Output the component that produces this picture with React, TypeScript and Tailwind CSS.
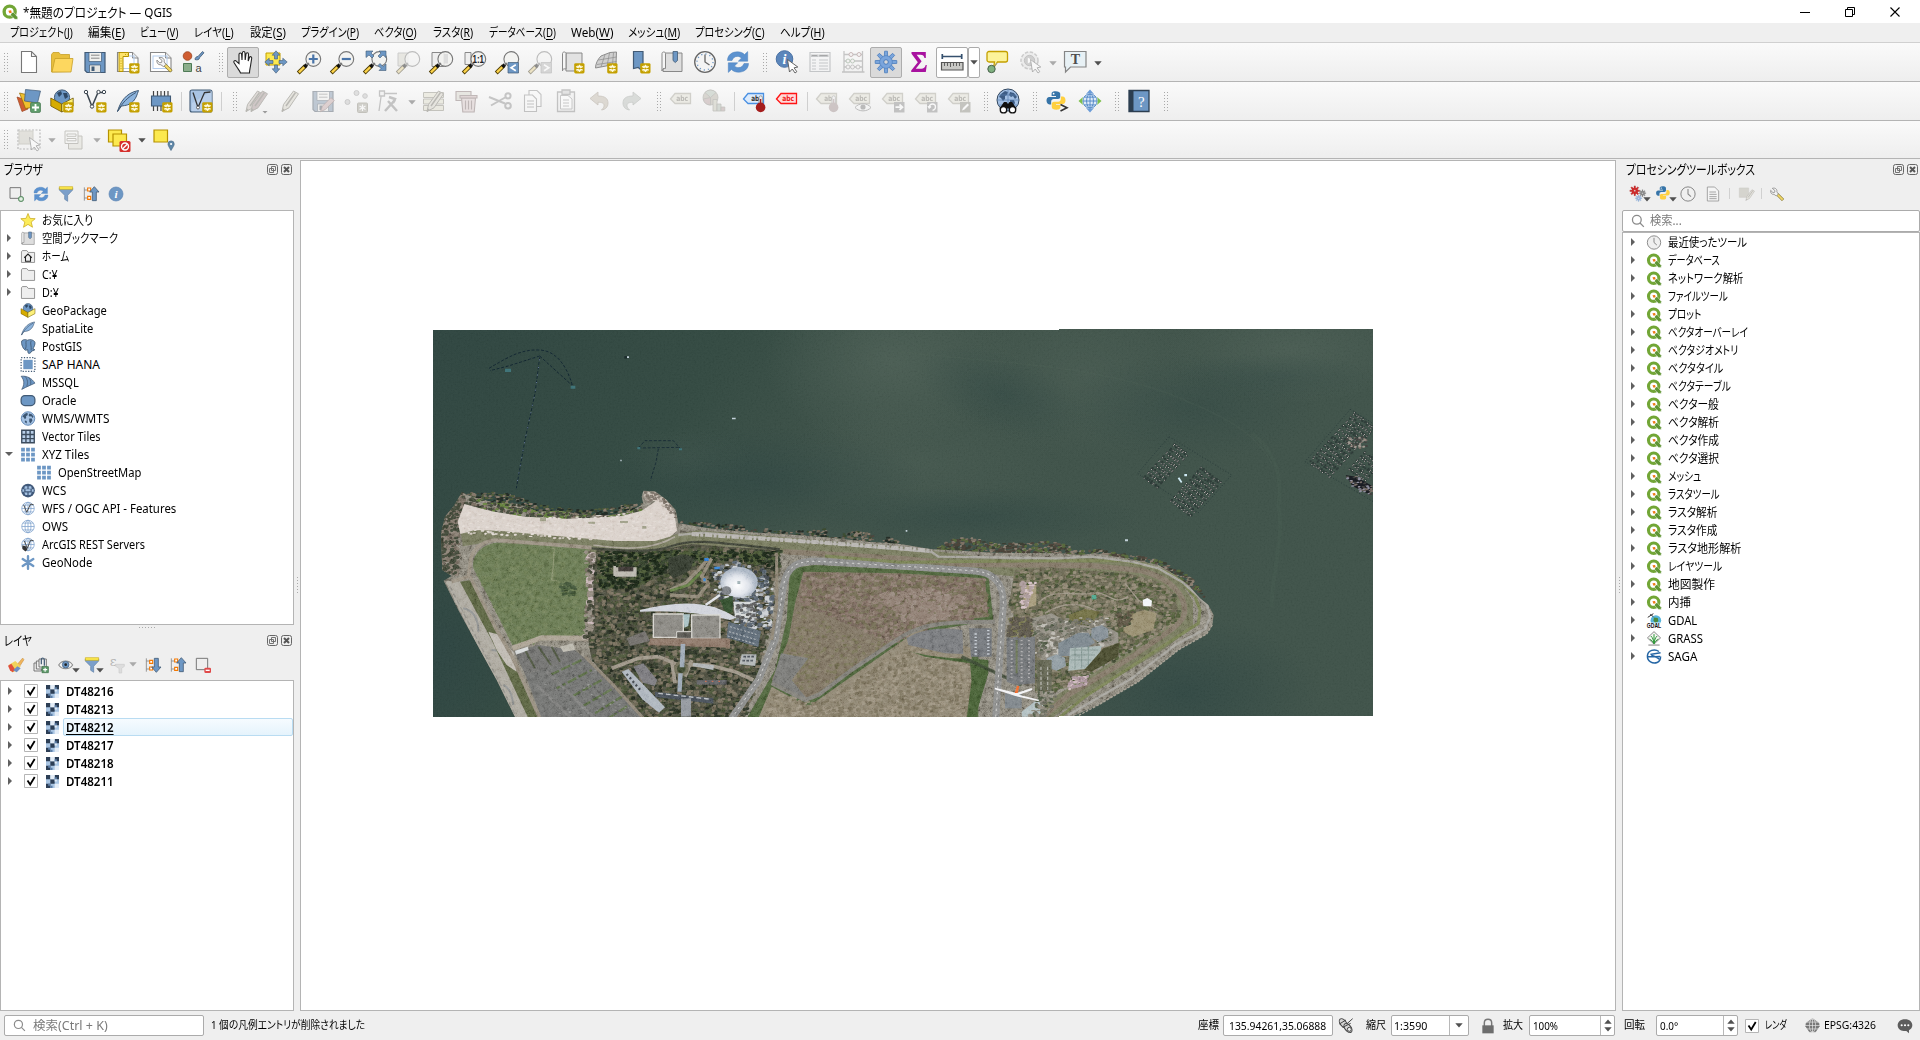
import React, { useLayoutEffect, useRef, useState } from "react";

/* ---------- text fitted to a known width ---------- */
function Fit({ w, children, className = "", inner = "" }: { w: number; children: React.ReactNode; className?: string; inner?: string }) {
  const ref = useRef<HTMLSpanElement>(null);
  const [s, setS] = useState(1);
  useLayoutEffect(() => {
    if (ref.current && ref.current.offsetWidth) setS(w / ref.current.offsetWidth);
  }, [w]);
  return (
    <span className={"inline-block shrink-0 whitespace-nowrap " + className} style={{ width: w }}>
      <span ref={ref} className={"inline-block origin-left whitespace-nowrap " + inner} style={{ transform: `scaleX(${s})` }}>
        {children}
      </span>
    </span>
  );
}

/* ---------- icon pieces ---------- */
const B = "#6d97c4";
const BD = "#415a75";

const Badge = () => (
  <g>
    <rect x="13.2" y="13.2" width="10.3" height="10.3" rx="1.4" fill="#c4a000" />
    <path d="M18.4 14.8v7.2M15 16.6l6.8 3.6M21.8 16.6L15 20.2M16.6 15.6l3.6 5.8M20.2 15.6l-3.6 5.8" stroke="#fffbe0" strokeWidth="1.1" />
    <circle cx="18.4" cy="18.4" r="1" fill="#c4a000" />
  </g>
);
const Handle = () => (
  <g strokeLinecap="butt">
    <path d="M1.2 23L8.6 15.8" stroke="#4d3b00" strokeWidth="4" />
    <path d="M1.9 22.3L7.4 17" stroke="#fcd34a" strokeWidth="2.4" />
    <path d="M7.4 17L10 14.5" stroke="#111" strokeWidth="3.2" />
    <path d="M9.5 15l2.5-2" stroke="#777" strokeWidth="1.4" />
  </g>
);
const Lens = () => <circle cx="16.3" cy="9" r="7.4" fill="#f2f2f0" fillOpacity=".85" stroke="#777" strokeWidth="1.1" />;
const Tag = ({ t = "abc", fill = "#e4dfc6", stroke = "#a8a38c", color = "#77725e" }: { t?: string; fill?: string; stroke?: string; color?: string }) => (
  <g>
    <path d="M1.5 10L6 4.500h15.500v10H6z" fill={fill} stroke={stroke} strokeWidth="1.3" />
    <text x="13.2" y="12.4" fontSize="7.5" fontWeight="700" textAnchor="middle" fill={color} fontFamily="'DejaVu Sans'" textLength={t.length * 4} lengthAdjust="spacingAndGlyphs">{t}</text>
  </g>
);
const Caret = ({ dim = false, className = "" }: { dim?: boolean; className?: string }) => (
  <svg viewBox="0 0 8 5" className={"h-[5px] w-[8px] shrink-0 " + className}>
    <path d="M.3.3h7.4L4 4.5z" fill={dim ? "#aaa" : "#505050"} />
  </svg>
);
const Refresh = () => (
  <g fill="#5c92cf" stroke="#4a7fbb" strokeWidth=".5">
    <path d="M1.5 10.5C1.5 5 6 1.8 11.5 1.8c3 0 5.3 1 7 2.8l3.2-3v9.6h-9.4l3.2-3.2C14.4 7 13 6.400 11.500 6.400c-3 0-4.200 1.500-5.500 4.100z" />
    <path d="M22.500 13.500c0 5.500-4.500 8.700-10 8.700-3 0-5.300-1-7-2.800l-3.200 3v-9.600h9.400l-3.200 3.200c1.100 1 2.500 1.600 4 1.600 3 0 4.200-1.500 5.500-4.100z" />
  </g>
);
const Python = () => (
  <g>
    <path d="M11.500 1.500c-4 0-4.500 1.700-4.500 3V7h5v1H4.500C2.300 8 1.200 9.800 1.200 12.200s1.300 4.300 3.300 4.300h2V13.500c0-1.800 1.300-3 3-3h4.800c1.500 0 2.500-1.100 2.500-2.600V4.500c0-2-2-3-5.300-3z" fill="#3674a8" />
    <circle cx="9.300" cy="4.300" r="1" fill="#fff" />
    <path d="M12.500 22.500c4 0 4.500-1.700 4.500-3V17h-5v-1h7.500c2.200 0 3.300-1.800 3.300-4.200S21.500 7.500 19.500 7.500h-2v3c0 1.800-1.300 3-3 3H9.700c-1.500 0-2.500 1.100-2.500 2.600v3.400c0 2 2 3 5.300 3z" fill="#ffd040" />
  </g>
);
const Globe = ({ fill = "#fff", stroke = B }: { fill?: string; stroke?: string }) => (
  <g fill="none" stroke={stroke} strokeWidth="1.300">
    <circle cx="12" cy="12" r="10" fill={fill} />
    <ellipse cx="12" cy="12" rx="4.800" ry="10" />
    <path d="M2 12h20M3.800 6.500h16.400M3.800 17.500h16.400M12 2v20" />
  </g>
);
const EarthBlobs = ({ fill = "#3b5572" }: { fill?: string }) => (
  <path d="M5 6l4-3 3 1-1 3-2 1v3l-2 2-2-3-2-1zM14 4l4 1 3 4-2 2-2-3-2 1-2-2zM14 12l4 0 1 3-3 5-2-3zM7 15l3 1 0 4-3-2z" fill={fill} />
);
const Wrench = () => (
  <g>
    <path d="M12 12l9 9" stroke="#7a6a20" strokeWidth="4.400" />
    <path d="M12 12l8.600 8.600" stroke="#f2d96b" strokeWidth="2.800" />
    <path d="M5 3.500l4 3.500-.5 2.500L6 10 2.500 6.500C1.800 10 4 13 7.500 12.500L11 15l3-3-2.200-3.200C12.800 5 9 2 5 3.500z" fill="#f4f4f4" stroke="#777" strokeWidth="1" />
  </g>
);
const Pencil = ({ x = 0, fill = "#d9d2b8" }: { x?: number; fill?: string }) => (
  <g transform={`translate(${x} 0)`}>
    <path d="M3 22.500l1.500-7L14.500 2l5 2.800-9.500 14z" fill={fill} stroke="#77725e" strokeWidth="1" />
    <path d="M7 17L16.500 3.500M3 22.500l2-2.500" stroke="#77725e" strokeWidth="1.500" />
  </g>
);
const Gear = ({ fill = "#7aa5dc", stroke = "#4b7dbd", hole = "#d8d8d8" }: { fill?: string; stroke?: string; hole?: string }) => (
  <g>
    {[0, 45, 90, 135, 180, 225, 270, 315].map((a) => (
      <path key={a} transform={`rotate(${a} 12 12)`} d="M10.300 7L10.600 1.200h2.800L13.700 7z" fill={fill} stroke={stroke} strokeWidth=".8" />
    ))}
    <circle cx="12" cy="12" r="6.200" fill={fill} stroke={stroke} strokeWidth=".8" />
    <circle cx="12" cy="12" r="5.700" fill={fill} />
    <circle cx="12" cy="12" r="2.300" fill={hole} stroke={stroke} strokeWidth="1" />
  </g>
);
const Thermo = ({ c = "#a51d1d" }: { c?: string }) => (
  <g>
    <path d="M17 8.500a1.700 1.700 0 013.400 0V15H17z" fill="#eee" stroke="#888" strokeWidth=".8" />
    <circle cx="18.600" cy="18.400" r="4.800" fill={c} />
    <path d="M18.600 10v6" stroke={c} strokeWidth="1.400" />
  </g>
);
const PageIcon = () => (
  <path d="M4.500 1.500h10l5 5v16h-15z M14.500 1.500v5h5" fill="#fff" stroke="#777" strokeWidth="1.100" />
);
const Arrow4 = () => (
  <g fill={B} stroke={BD} strokeWidth=".6">
    {[0, 90, 180, 270].map((a) => (
      <path key={a} transform={`rotate(${a} 12 12)`} d="M12 .8l3.800 4.400h-2.300V9h-3V5.200H8.200z" />
    ))}
  </g>
);
const Floppy = () => (
  <g>
    <path d="M2 2.500h20v20H4l-2-2z" fill={B} stroke={BD} strokeWidth="1.200" />
    <path d="M6 2.500h12.500v9H6z" fill="#f1f1ee" stroke={BD} strokeWidth=".7" />
    <path d="M8 5.200h8.500M8 8.200h8.500" stroke="#888" strokeWidth="1" />
    <path d="M6.500 15h11v7.500h-11z" fill="#e6e6e3" stroke={BD} strokeWidth=".7" />
    <path d="M8.500 16.500h3v4.500h-3z" fill={BD} />
  </g>
);
const Layout = () => (
  <g>
    <path d="M1.500 2.500h15l5.500 5.500v13.500H1.500z" fill="#fff" stroke="#888" strokeWidth="1.100" />
    <path d="M16.500 2.500V8H22" fill="#eee" stroke="#888" />
    <rect x="4" y="6" width="14" height="12.500" fill="none" stroke="#b4cdee" />
  </g>
);
const Feather = () => (
  <g>
    <path d="M1.500 22.500C4 14 9 4 22.500 1.500c-1.500 4-2 7-5 10.500-3.500 4-8 4.500-12 5z" fill="#8db4dd" stroke={BD} strokeWidth="1" />
    <path d="M1.500 22.500C6 14 12 8 20 3.500" fill="none" stroke={BD} strokeWidth="1" />
  </g>
);
const VShape = () => (
  <g fill="none" stroke="#3c4650" strokeWidth="1.500">
    <path d="M3.500 3.500l5.500 14L15 3.500l6 0" />
    <circle cx="3" cy="3" r="1.700" fill="#fff" strokeWidth="1" /><circle cx="21" cy="3" r="1.700" fill="#fff" strokeWidth="1" /><circle cx="15.500" cy="3" r="1.700" fill="#fff" strokeWidth="1" /><circle cx="9" cy="17.500" r="1.700" fill="#fff" strokeWidth="1" />
  </g>
);
const Box3 = () => (
  <g>
    <circle cx="12" cy="8.500" r="7.600" fill={B} stroke={BD} />
    <path d="M7 4l4-2 1 3-3 3zM13 4l4 0 1 4-3 2z" fill="#2f4864" />
    <path d="M.8 9l11 6v8L.8 17z" fill="#d6ac00" stroke="#6d5600" strokeWidth=".8" />
    <path d="M23.200 9l-11.400 6v8l11.400-6z" fill="#fcf07a" stroke="#6d5600" strokeWidth=".8" />
  </g>
);
const Undo = () => <path d="M3 9.500l8-6.500v4c7 0 10 2.500 10 7 0 4-2.500 6.500-6.500 7 2-2 2.500-3.200 2.500-4.500 0-2.500-2-3.200-6-3.200V16z" fill="#c9b79a" stroke="#a08c70" strokeWidth=".8" />;
const Trash = () => (
  <g stroke="#8f6a6a" strokeWidth="1.100">
    <path d="M1 2.500h15v9H1z" fill="#d8d3c0" />
    <path d="M6.500 9h14l-1.300 14H7.800z" fill="#e5c3c3" />
    <path d="M5 6.500h17v2.500H5z" fill="#d9adad" />
    <path d="M10.500 11.500v9M13.500 11.500v9M16.500 11.500v9" />
  </g>
);
const Cursor = () => <path d="M12.500 9.500l2 12.500 2.800-3 2.700 4 1.800-1.300-2.700-3.900 3.700-.8z" fill="#fff" stroke="#555" strokeWidth=".9" />;

const G: Record<string, React.ReactNode> = {
  new: <PageIcon />,
  open: <g><path d="M1.500 4.500L3 2.500h6l1.500 2h9v17l-18 .5z" fill="#e8bf3d" stroke="#c69f27" strokeWidth=".8" /><path d="M5 8.500h18L21 22H2z" fill="#fdd75f" stroke="#c69f27" strokeWidth=".8" /></g>,
  save: <Floppy />,
  layoutNew: <g><Layout /><path d="M3 2.500h9.500v4H7v15H3z" fill="#fde36b" stroke="#b59200" strokeWidth="1" /><path d="M5 8v12M9 4.500h3" stroke="#b59200" strokeWidth=".8" strokeDasharray="1 1.500" /><Badge /></g>,
  layoutMgr: <g><Layout /><g transform="translate(6 5) scale(.78)"><Wrench /></g></g>,
  style: <g><circle cx="5.500" cy="6" r="4.300" fill="#cf5d31" stroke="#9b4420" strokeWidth=".8" /><path d="M13 9.500c0-2 1.500-3 3-3L20.500 1.500l1.500 1.300-4.500 5c0 2-2.500 2.500-4.500 1.700z" fill={B} stroke={BD} strokeWidth=".8" /><path d="M1.500 13.500h8v8h-8z" fill="#8cae8c" stroke="#4e7a55" strokeWidth="1" /><text x="13.500" y="21.500" fontSize="11" fill="#444" fontFamily="'Liberation Sans'">a</text></g>,
  pan: <path d="M8 13.500V4.500c0-2 2.600-2 2.600 0l.4 5.500.3-7c.2-2 2.600-2 2.700 0l.2 7 .8-6c.3-1.800 2.500-1.600 2.500.2l-.3 6.800 1.200-3.500c.7-1.500 2.500-.9 2.300.8L19.500 16c-.5 3-1 4-1 7H9.500c-.5-2-2.500-4-4-6.500L3 12.500c-.8-1.800 1.300-2.600 2.400-1.200z" fill="#fff" stroke="#222" strokeWidth="1.100" />,
  panSel: <g><path d="M2 3h14v12H2z" fill="#fce94f" stroke="#c4a000" /><Arrow4 /></g>,
  zoomIn: <g><Lens /><Handle /><path d="M16.300 4.500v9M11.800 9h9" stroke="#4a74a8" strokeWidth="2.200" /></g>,
  zoomOut: <g><Lens /><Handle /><path d="M11.800 9h9" stroke="#4a74a8" strokeWidth="2.200" /></g>,
  zoomFull: <g><Lens /><Handle /><g fill={B} stroke={BD} strokeWidth=".6"><path d="M3 1h7L8 3l3 3-2 2-3-3-3 2.500zM23 1h-7l2 2-3 3 2 2 3-3 3 2.500zM23 20.500h-7l2-2-3-3 2-2 3 3 3-2.500z" /></g></g>,
  zoomSel: <g><path d="M2 3h10v13H2z" fill="#d9d4be" stroke="#999" /><Lens /><Handle /></g>,
  zoomLayer: <g><path d="M3 2.500h12v14H3z" fill="#eee" stroke="#888" /><Lens /><path d="M15 4h4v9.500h-4z" fill="#ddd" /><Handle /></g>,
  zoom11: <g><path d="M3 2.500h6v12H3z" fill="#eee" stroke="#888" /><Lens /><Handle /><text x="16.300" y="12.600" fontSize="10" fontWeight="700" textAnchor="middle" fill="#222" fontFamily="'Liberation Sans'" textLength="11.500" lengthAdjust="spacingAndGlyphs">1:1</text></g>,
  zoomLast: <g><Lens /><Handle /><path d="M13 12.500h10.500V23H13z" fill={B} stroke={BD} strokeWidth=".7" /><path d="M20.800 14.800L16 17.700l4.800 3" fill="none" stroke="#fff" strokeWidth="1.600" /></g>,
  zoomNext: <g><Lens /><Handle /><path d="M13 12.500h10.500V23H13z" fill="#b5b5b5" stroke="#888" strokeWidth=".7" /><path d="M16 14.800l4.800 2.900L16 20.700" fill="none" stroke="#fff" strokeWidth="1.600" /></g>,
  mapNew: <g><path d="M5 3h16v18H5z" fill="#e2e2e2" stroke="#888" /><path d="M1.500 3.500c0-2 3.500-2 3.500 0V19c-2-.5-3.500 0-3.500 2z" fill="#f6f6f6" stroke="#888" /><Badge /></g>,
  map3d: <g><path d="M7 6l9-3.500 6.500-.5-.5 12-10 2-10.500 2c0-4 2-8.500 5.500-12z" fill="#cfcfcf" stroke="#8d8d8d" /><path d="M4.500 10l18-3M3 14.500l19.500-3M11 4.500L7 17M15.500 3l-2.500 13M19.500 2.500l-1 12" stroke="#8d8d8d" strokeWidth=".7" /><Badge /></g>,
  bookmarkNew: <g><path d="M6.500 1.500h9.500v20l-4.800-4-4.700 1z" fill={B} stroke={BD} strokeWidth="1.200" /><Badge /></g>,
  bookmark: <g><path d="M5 3h17v18.500H3z" fill="#dedede" stroke="#888" /><path d="M2 3.500c0-2 3.500-2 3.500 0V18.500c-2-.5-3.500 .5-3.500 2.500z" fill="#f6f6f6" stroke="#888" /><path d="M13 1.500h4.500v9l-2.250 2-2.250-2z" fill={B} stroke={BD} strokeWidth=".8" /></g>,
  clock: <g><circle cx="12" cy="12" r="10.300" fill="#f4f4f4" stroke="#666" strokeWidth="1.300" /><circle cx="12" cy="12" r="8" fill="none" stroke={B} strokeWidth="1.300" strokeDasharray="1.200 3" /><path d="M12 4.500V12l4.500 3" fill="none" stroke="#666" strokeWidth="1.300" /></g>,
  refresh: <Refresh />,
  identify: <g><circle cx="9.500" cy="9" r="8.300" fill="#5b86bb" stroke="#4a72a4" /><text x="9.500" y="14" fontSize="14" fontStyle="italic" fontWeight="700" textAnchor="middle" fill="#fff" fontFamily="'Liberation Serif'">i</text><Cursor /></g>,
  table: <g><path d="M2 2.500h20v19H2z" fill="#f2f4f6" stroke="#8a929a" strokeWidth="1.200" /><path d="M3.500 5h6v1.500h-6zM11 5h9v1.500h-9zM4 10h4M11 10h9M4 13h4M11 13h9M4 16h4M11 16h9M4 19h4M11 19h9" stroke="#8a929a" strokeWidth="1.100" /></g>,
  abacus: <g fill="none" stroke="#8b8b8b" strokeWidth="1.300"><path d="M3 1v21M21.500 1v21M1 22h22.500M3 4.500h18.500M3 11h18.500M3 17h18.500" /><g fill="#f5eeee" strokeWidth="1"><circle cx="10" cy="4.500" r="2" stroke="#a66" /><circle cx="18" cy="4.500" r="2" stroke="#a66" /><circle cx="7" cy="11" r="2" stroke="#696" /><circle cx="11.500" cy="11" r="2" stroke="#696" /><circle cx="7" cy="17" r="2" /><circle cx="11.500" cy="17" r="2" /><circle cx="17" cy="17" r="2" /></g></g>,
  gear: <Gear />,
  sigma: <path d="M4.500 2h14.300v6h-1.300c-.6-2.300-1.600-3.200-4-3.200H9.600l5 6.500-5.800 7.500h5.500c2.600 0 3.600-1.200 4.400-3.700h1.100L18.800 22H4.200v-1.500l6.600-8.300-6.300-8.500z" fill="#a8129f" />,
  measure: <g><path d="M2 6.500h20M2.300 4v5M21.700 4v5" stroke="#35506e" strokeWidth="1.700" /><path d="M1.500 12.500h21.500v7.500H1.500z" fill="#c9c9c6" stroke="#555" strokeWidth="1.200" /><path d="M4.500 13v3M7.500 13v3M10.500 13v4M13.500 13v3M16.500 13v3M19.500 13v3" stroke="#555" strokeWidth=".9" /></g>,
  tip: <g><path d="M4 1.500h16.500a2 2 0 012 2V10a2 2 0 01-2 2H12.500L8.500 18l1-6H4a2 2 0 01-2-2V3.500a2 2 0 012-2z" fill="#fcf39a" stroke="#c4a000" strokeWidth="1.300" /><path d="M12 13l-4 5" stroke="#999" /><circle cx="6.500" cy="19" r="3.700" fill="#7fb17f" stroke="#47604a" strokeWidth="1" /></g>,
  action: <g><circle cx="11.500" cy="10.500" r="8.500" fill="#e3e3e3" stroke="#999" strokeWidth="1.500" strokeDasharray="3.500 1.500" /><circle cx="11.500" cy="10.500" r="5.200" fill="#a2a2a2" stroke="#888" /><path d="M9.800 7.500l5 3-5 3z" fill="#fff" /><Cursor /></g>,
  text: <g><path d="M1.500 1.500H23v15.500H7.500L2.500 22V17h-1z" fill="#e8f1f5" stroke="#858585" strokeWidth="1.200" /><text x="12.300" y="14" fontSize="14" fontWeight="700" textAnchor="middle" fill="#4d4d4d" fontFamily="'Liberation Serif'">T</text></g>,
  dsm: <g strokeWidth=".7"><path d="M0 8l9 3 2 9-6 2.500z" fill="#cf5d31" stroke="#9b4420" /><path d="M2.500 4l9 2 6 12-9 1.500z" fill="#f0c02e" stroke="#8f6a00" /><path d="M8.500 .5l15 1.500-3 12-13-2z" fill={B} stroke={BD} /><rect x="13.500" y="13.500" width="10" height="10" rx="1.500" fill="#5f9c6b" stroke="#477a52" /><path d="M18.500 15v7M15 18.500h7" stroke="#fff" strokeWidth="1.800" /></g>,
  gpkg: <g><Box3 /><Badge /></g>,
  shp: <g><VShape /><Badge /></g>,
  spatialite: <g><Feather /><Badge /></g>,
  mem: <g><path d="M4.500 2v20M8.500 2v20M12 2v20M15.500 2v20M19 2v12" stroke="#444" strokeWidth="1.200" /><path d="M2.500 7h19v10h-19z" fill={B} stroke={BD} strokeWidth="1.100" /><Badge /></g>,
  virtual: <g><rect x="1" y="1" width="22" height="22" rx="2" fill="#a9c4e3" stroke={BD} strokeWidth="1.100" /><path d="M3 14L23 2v20H3z" fill="#c4d7ee" opacity=".6" /><path d="M4 3.500l5 15L15.500 3.500l6-.5" fill="none" stroke="#333" strokeWidth="1.300" /><circle cx="9" cy="18.500" r="1.500" fill="#fff" stroke="#333" strokeWidth=".7" /><Badge /></g>,
  edits: <g><Pencil x={-2} fill="#cdbcae" /><Pencil x={3} fill="#b58f8f" /><path d="M17.500 22h5l-2.500 2.500z" fill="#333" /></g>,
  pencil: <Pencil x={1} />,
  saveEdit: <g><Floppy /><g transform="translate(8 8) scale(.7)"><path d="M2 21l3-8L17 1l5 4L9 18z" fill="#d9a0a0" stroke="#855" /></g></g>,
  points: <g fill="#c4c4c4" stroke="#999"><circle cx="3.500" cy="13" r="2.500" /><circle cx="12.500" cy="4" r="2.500" /><circle cx="21" cy="7" r="2.300" /><rect x="13.500" y="14" width="10" height="9.500" rx="1" fill="#a8a48e" stroke="#8e8a70" /><path d="M18.500 15.500v6.500M15.500 17l6 3.500M21.500 17l-6 3.500" stroke="#fff" strokeWidth="1.200" /></g>,
  vertex: <g fill="none" stroke="#8a8a8a" strokeWidth="1.300"><path d="M2 22L4.500 4.500H20" /><path d="M2.500 2h5v5h-5z" fill="#eee" /><path d="M8 22L18 11M11 12l9 10" strokeWidth="2.500" /><path d="M12 8l6 2-2 4" strokeWidth="2.500" /></g>,
  multiEdit: <g><path d="M1.500 3.500h20v5h-20zM1.500 10h20v5h-20zM1.500 16.500h20v5h-20z" fill="#e3dfb8" stroke="#8f8b70" /><Pencil x={2} /></g>,
  trash: <Trash />,
  cut: <g fill="none" stroke="#8c8c8c" strokeWidth="2"><path d="M1 8l16 6.500M3 16.500L18 8" /><circle cx="20" cy="6.800" r="2.600" /><circle cx="20" cy="16.800" r="2.800" /></g>,
  copy: <g fill="#fafafa" stroke="#888" strokeWidth="1.100"><path d="M8 1.500h8l4 4v12H8z" /><path d="M3.500 6h8l4 4v12.500h-12z" /><path d="M6 12h7M6 15h7M6 18h7" /></g>,
  paste: <g fill="#eee" stroke="#888" strokeWidth="1.300"><path d="M3.500 3h17v19.500h-17z" /><path d="M8 1h8v4.500H8z" fill="#ccc" /><path d="M6.500 6.500h7.500l4 3.500v10H6.500z" fill="#fff" strokeWidth=".9" /><path d="M9 11h6M9 14h6M9 17h6" strokeWidth=".9" /></g>,
  undo: <Undo />,
  redo: <g transform="translate(24 0) scale(-1 1)"><path d="M3 9.500l8-6.500v4c7 0 10 2.500 10 7 0 4-2.500 6.500-6.500 7 2-2 2.500-3.200 2.500-4.500 0-2.500-2-3.200-6-3.200V16z" fill="#b5bfb5" stroke="#909a90" strokeWidth=".8" /></g>,
  tag: <Tag />,
  diagram: <g stroke="#8a8a7a" strokeWidth=".8"><circle cx="8.500" cy="8.500" r="7.500" fill="#b8af97" /><path d="M8.500 8.500L3 3.500a7.500 7.500 0 0111 0z" fill="#a9c0a9" /><path d="M8.500 8.500v7.500a7.500 7.500 0 01-7.300-6z" fill="#c99a9a" /><path d="M11 10.500h4v11.500h-4z" fill="#c7c7a8" /><path d="M15 15h4v7h-4z" fill="#a9c0a9" /><path d="M19 18h3.800v4H19z" fill="#c99a9a" /></g>,
  tagBlue: <g><Tag t="ab" fill="#dcebfc" stroke="#4a90e2" color="#333" /><Thermo /></g>,
  tagRed: <Tag fill="#ffd9d9" stroke="#ff1414" color="#f01818" />,
  tagPin: <g><Tag t="ab" /><Thermo c="#b08a8a" /></g>,
  tagEye: <g><Tag /><path d="M7 18.500c4-5 12-5 16 0-4 4.500-12 4.500-16 0z" fill="#f6f6f6" stroke="#777" /><circle cx="15" cy="18" r="2.600" fill="#777" /></g>,
  tagMove: <g><Tag /><path d="M13 13h10.500v10.500H13z" fill="#888" /><path d="M14.500 18.200h6.500M18.500 15.500l3 2.700-3 2.700" stroke="#fff" strokeWidth="1.700" fill="none" /></g>,
  tagRot: <g><Tag /><path d="M13 13h10.500v10.500H13z" fill="#888" /><path d="M15.500 18a3 3 0 116 0c0 2-1.500 3-3 3.300M17 17.500l-1.800 1.500-1.200-2" stroke="#fff" strokeWidth="1.300" fill="none" /></g>,
  tagEdit: <g><Tag /><path d="M13 13h10.500v10.500H13z" fill="#8f8d78" /><path d="M15 21.500l1-2.500 4.500-4.500 1.500 1.500L17.500 20.500z" fill="#fff" /></g>,
  search: <g><circle cx="12" cy="11" r="11" fill="#a3c0e4" stroke="#33475e" /><g transform="translate(0 -1)"><EarthBlobs fill="#3d5c84" /></g><path d="M1 11h22M12 0v20M3 6h18M3 16h18" stroke="#5980b0" strokeWidth=".7" /><path d="M8 13h2.500l1.500 2 1.500-2H16l4.500 6.500-5 2.500-3.500-3-3.500 3-5-2.500z" fill="#111" /><circle cx="7.500" cy="20.700" r="3.200" fill="#fff" stroke="#111" strokeWidth="1.400" /><circle cx="16.500" cy="20.700" r="3.200" fill="#fff" stroke="#111" strokeWidth="1.400" /></g>,
  python: <g><g transform="scale(.88) translate(.5 1)"><Python /></g><path d="M15.500 15.500l6.500 3.200-6.500 3.300" fill="none" stroke="#333" strokeWidth="1.600" /></g>,
  plugin: <g><g transform="translate(3.500 3.500) scale(.71)"><Globe fill="#ddeaf8" stroke="#4e86c6" /></g><path d="M12 .5l4 4.500c-3-1-5-1-8 0zM12 23.500l4-4.500c-3 1-5 1-8 0z" fill="#6b9cd8" /><path d="M.5 12L5 8c-1 3-1 5 0 8zM23.500 12L19 8c1 3 1 5 0 8z" fill="#7cc04c" /></g>,
  help: <g><path d="M2 1.500h20v21H2z" fill={B} stroke="#2c3e50" strokeWidth="1.300" /><path d="M2 1.500h4.500v21H2z" fill="#2c3e50" /><text x="14.300" y="17.500" fontSize="15" textAnchor="middle" fill="#fff" fontFamily="'Liberation Serif'">?</text></g>,
  select: <g><path d="M1 2h22v19H1z" fill="none" stroke="#777" strokeWidth="1.200" strokeDasharray="2 1.500" /><path d="M2 3h14v13H2z" fill="#ccc8b2" stroke="#a8a48e" /><Cursor /></g>,
  selForm: <g stroke="#8f8b78"><path d="M6.500 8H20v13H6.500z" fill="#e1deca" /><path d="M3 3h13v12.500H3z" fill="#f3f3f0" /><path d="M5 6h9v2.300H5zM5 10.500h9v2.300H5z" fill="#fff" /></g>,
  deselect: <g><path d="M1.500 2h13v12h-13z" fill="#fce94f" stroke="#b59200" strokeWidth="1.200" /><path d="M6 6h13.500v12H6z" fill="#fce94f" stroke="#b59200" strokeWidth="1.200" /><rect x="12.500" y="13" width="11" height="11" rx="1.500" fill="#d5302c" /><circle cx="18" cy="18.500" r="3.500" fill="none" stroke="#fff" strokeWidth="1.400" /><path d="M15.500 21l5-5" stroke="#fff" strokeWidth="1.400" /></g>,
  selLoc: <g><path d="M2 2h13.500v12H2z" fill="#fce94f" stroke="#b59200" strokeWidth="1.200" /><path d="M19 22.500c-2-3.500-3-5-3-6.500a3 3 0 016.200 0c0 1.500-1.200 3-3.200 6.500z" fill="#5f87a8" stroke="#4a6b88" strokeWidth=".7" /><circle cx="19.100" cy="16" r="1.100" fill="#fff" /></g>,
  addLayer: <g><path d="M3 2.500h16v16H3z" fill="none" stroke="#777" strokeWidth="1.500" /><circle cx="19.500" cy="19.500" r="4" fill="#9cc4a0" stroke="#477a52" /><path d="M19.500 17v5M17 19.500h5" stroke="#fff" strokeWidth="1.400" /></g>,
  filter: <g><path d="M2 3h20v3l-7.500 8v9L10 20v-6L2 6z" fill="#7b9fca" stroke="#56789f" strokeWidth=".9" /><path d="M2 1h20v4H2z" fill="#fce94f" stroke="#c4a000" strokeWidth=".8" /></g>,
  collapse: <g><path d="M2 2v20M2 6h6M2 18h6" stroke="#888" strokeWidth="1.300" /><path d="M7 3h4.500v4.500H7zM7 15.500h4.500V20H7z" fill="#fff" stroke="#f57900" strokeWidth="1.700" /><path d="M17 1l7 8h-4v13h-6V9h-4z" fill={B} stroke={BD} strokeWidth="1.200" /></g>,
  expand: <g><path d="M2 2v20M2 6h6M2 18h6" stroke="#888" strokeWidth="1.300" /><path d="M7 5h4.500v4.500H7zM7 15h4.500v4.500H7z" fill="#fff" stroke="#f57900" strokeWidth="1.700" /><path d="M17 23l-7-8h4V2h6v13h4z" fill={B} stroke={BD} strokeWidth="1.200" /></g>,
  info: <g><circle cx="12" cy="12" r="10.500" fill={B} stroke="#5b84b3" /><text x="12" y="18" fontSize="17" fontStyle="italic" fontWeight="700" textAnchor="middle" fill="#fff" fontFamily="'Liberation Serif'">i</text></g>,
  brush: <g><path d="M14 11L22 1.500 24 4 17.500 14z" fill="#f0b45c" stroke="#b87e2c" strokeWidth=".6" /><path d="M1 12l10-6 8 8-6 7-7 2z" fill="#f0d35c" /><path d="M0 13l5-3 6 9-4 4-4-3z" fill="#e0503c" /><path d="M8 20l6-6 5 3-6 6z" fill="#6d8fc4" /></g>,
  addGroup: <g fill="#efefef" stroke="#666" strokeWidth="1.300"><path d="M1.500 9h11v12h-11z" /><path d="M5 6h11v12H5z" /><path d="M9 3h11v12H9z" /><path d="M12.500 11V4.500c0-4 4.500-4 4.500 0V13" fill="none" stroke={BD} strokeWidth="1.800" /><path d="M13.500 14.500h9.500v9h-9.500z" fill="#5f9c6b" stroke="#477a52" /><path d="M18.200 16v6M15.300 19h6" stroke="#fff" strokeWidth="1.700" /></g>,
  eye: <g><path d="M1 12C6 4 17 4 22 12c-5 7.500-16 7.500-21 0z" fill="#f4f4f4" stroke="#8b8b8b" strokeWidth="1.600" /><circle cx="11.500" cy="11.500" r="5" fill={B} stroke={BD} /><circle cx="11.500" cy="11.500" r="2" fill="#222" /></g>,
  epsilon: <g><text x="1" y="14" fontSize="20" fill="#b5b5b5" fontFamily="'DejaVu Serif'">ε</text><path d="M10 11h13v3l-4 3v7h-4v-7l-5-3z" fill="#ddd" stroke="#ccc" /></g>,
  removeLayer: <g><path d="M2 2h17v17H2z" fill="none" stroke="#777" strokeWidth="1.500" /><rect x="14" y="16" width="10" height="8" rx="2" fill="#e04a4a" /><path d="M16 20h6" stroke="#fff" strokeWidth="2" /></g>,
  models: <g><g transform="translate(-1 -1) scale(.68)"><Gear fill="#d42b2b" stroke="#a41e1e" hole="#efefef" /></g><g transform="translate(13 5) scale(.48)"><Gear fill="#8a8a8a" stroke="#777" hole="#efefef" /></g><g transform="translate(7.500 13) scale(.45)"><Gear fill="#9db9dd" stroke="#85a5cf" hole="#efefef" /></g></g>,
  py: <g transform="translate(-1 -1) scale(.95)"><Python /></g>,
  history: <g><circle cx="12" cy="12" r="10.700" fill="#f0f0f0" stroke="#888" strokeWidth="1.500" /><path d="M12 4.500V12l4.500 4" fill="none" stroke="#888" strokeWidth="1.600" /></g>,
  doc: <g><path d="M3.500 1.500h11l6 6v15h-17z" fill="#f5f5f5" stroke="#999" strokeWidth="1.300" /><path d="M6.500 9h10M6.500 12.500h11M6.500 16h11M6.500 19h11" stroke="#999" strokeWidth="1.300" /></g>,
  editFeat: <g><path d="M2 3h14v14H2z" fill="#b9b49c" stroke="#aaa693" /><g transform="translate(8 4) scale(.78)"><Pencil x={2} /></g></g>,
  wrench: <Wrench />,
  star: <path d="M12 .8l3.200 7.800 8.300.5-6.400 5.400 2.100 8.300-7.200-4.600-7.200 4.600 2.100-8.300L.5 9.100l8.300-.5z" fill="#fcec5a" stroke="#c9aa1a" strokeWidth="1.200" />,
  folder: <path d="M1.500 4.500L3 2.500h7l2.500 3h10v16h-21z" fill="#eee" stroke="#888" strokeWidth="1.400" />,
  home: <g><path d="M1.500 4.500L3 2.500h7l2.500 3h10v16h-21z" fill="#eee" stroke="#888" strokeWidth="1.400" /><path d="M6 14l6-6 6 6M8 12.500v7h8v-7" fill="none" stroke="#222" strokeWidth="1.700" /></g>,
  box: <Box3 />,
  feather: <Feather />,
  postgis: <g fill={B} stroke={BD} strokeWidth="1.400"><path d="M2 3c3-3 7-2 9-1 4-2 10-1 12 3 1 4-2 8-3 11 1 1 2 1 3 1-2 2-4 2-5 2-1 4-5 5-6 3l-.5-5-3 1c-4-1-8-10-6.500-15z" /><path d="M9 3c-1 4 1 8-1 13M17 3c-2 4 1 9 0 15" fill="none" /></g>,
  hana: <g><path d="M4.500 4.500h15v15h-15z" fill={B} /><path d="M1 1h22v22H1z" fill="none" stroke={BD} strokeWidth="2" strokeDasharray="2 2.400" /></g>,
  mssql: <g fill={B} stroke={BD} strokeWidth="1.200"><path d="M1 2c9-1 17 3 22 11-6 3-12 5-21 10C6 16 7 9 1 2z" /><path d="M7 2c5 5 5 11 3 16M13 4c4 4 4 8 3 11.500" fill="none" /></g>,
  oracle: <rect x="1" y="4" width="22" height="16" rx="6" fill={B} stroke={BD} strokeWidth="2" />,
  wms: <g><circle cx="12" cy="12" r="10.800" fill="#a6c3e4" stroke="#5f86b4" strokeWidth="1.500" /><EarthBlobs /></g>,
  vtiles: <g><path d="M2 2h20v20H2z" fill="#b9cfe8" /><path d="M2 2h20v20H2zM8.700 2v20M15.400 2v20M2 8.700h20M2 15.400h20" fill="none" stroke="#3c4c5e" strokeWidth="2.200" /></g>,
  xyz: <path d="M1 1h6v6H1zM9 1h6v6H9zM17 1h6v6h-6zM1 9h6v6H1zM9 9h6v6H9zM17 9h6v6h-6zM1 17h6v6H1zM9 17h6v6H9zM17 17h6v6h-6z" fill={B} />,
  wcs: <g><circle cx="12" cy="12" r="11" fill="#41597a" /><path d="M7 5h4v4H6zM13 5h4l1 4h-5zM3 10h3v4H3zM8 10h8v3H8zM18 10h3v4h-3zM6 15h5v4H8zM13 15h5l-2 4h-3z" fill="#a6c3e4" /></g>,
  wfs: <g><Globe stroke="#86a8d0" /><path d="M5 6l5 12L16 5l5 1" fill="none" stroke="#444" strokeWidth="1.500" /></g>,
  ows: <Globe stroke="#86a8d0" />,
  arcgis: <g><Globe stroke="#86a8d0" /><path d="M6 6l5 12L16 5l5 1" fill="none" stroke="#444" strokeWidth="1.500" /><path d="M3 13l6 2 2 5-3 3-5-4z" fill="#333" /></g>,
  geonode: <g stroke={B} strokeWidth="3.800" strokeLinecap="round"><path d="M12 2v20M3.500 6.500l17 11M20.500 6.500l-17 11" /></g>,
  q: <g><circle cx="11.500" cy="11.500" r="8.300" fill="#fff" stroke="#72a636" strokeWidth="5" /><path d="M13 13l4-.8 6.500 7.300V23h-4.200L13 17z" fill="#5f9433" stroke="#fff" strokeWidth=".7" /><path d="M8 8h5.500l3 4-4 4L8 12.500z" fill="#fff" /><path d="M9.500 10l4.200-.5 1 3.500-3.500 1z" fill="#ee7913" /></g>,
  gdal: <g><circle cx="15" cy="12" r="8.500" fill="#56b5dc" /><path d="M12 7l6 1 1 5-5 3-3-4z" fill="#4a8a3a" /><path d="M2 7L11 1M6 2l5 4" stroke="#333" strokeWidth="1.600" /><path d="M0 15h24v9H0z" fill="#fff" opacity=".7" /><text x="12" y="23.500" fontSize="10.500" fontWeight="700" fill="#111" textAnchor="middle" fontFamily="'Liberation Sans'" textLength="23" lengthAdjust="spacingAndGlyphs">GDAL</text></g>,
  grass: <g><path d="M12 1l10.500 10L12 21 1.500 11z" fill="#f5f5f2" stroke="#666" strokeWidth="1.200" /><path d="M12 20c-1-6-2-9-5-12M12 20V5M12 20c1-6 2-9 5-12M12 20c-2-4-4-5-7-7M12 20c2-4 4-5 7-7" stroke="#2f9a3a" strokeWidth="1.600" fill="none" /><path d="M3 22.500h18" stroke="#999" strokeWidth="2" /></g>,
  saga: <g fill="none" stroke="#2465a4" strokeWidth="2.400"><path d="M20 4C13-1 2 2 1.500 11S10 24 17 21.500c4-1.500 5.500-6 5.500-9.500" /><path d="M22.500 6L7.500 8.500c2 4 9 3 13 8M2 12.500h12M12 12.500l10-.5" /></g>,
  raster: <g><path d="M0 0h24v24H0z" fill="#a9c5e3" /><path d="M0 0h8v8H0zM16 0h8v8h-8zM8 8h8v8H8zM0 16h8v8H0z" fill="#2c3e55" /><path d="M8 0h8v8H8zM16 8h4v4h-4zM16 16h8v8h-8z" fill="#e4edf7" /><path d="M16 4h4v4h-4zM4 16h4v4H4zM8 20h4v4H8z" fill="#5b7ea8" /></g>,
  lens: <g fill="none" stroke="#8b8b8b" strokeWidth="2.200"><circle cx="10" cy="10" r="7.500" /><path d="M15.500 15.500l6.500 6.500" /></g>,
  lock: <g><path d="M6.500 12V7c0-7 11-7 11 0v5" fill="none" stroke="#777" strokeWidth="2.200" /><path d="M3.500 11h17v12h-17z" fill="#6d6d6d" /></g>,
  mouse: <g stroke="#444" strokeWidth="1.500" fill="#d5d5d5"><ellipse cx="8" cy="8" rx="4.500" ry="8" transform="rotate(-38 8 8)" /><ellipse cx="15" cy="15" rx="4.500" ry="8" transform="rotate(-38 15 15)" /><path d="M2 9L12 3M7 14L19 8M22 1l-9 8" fill="none" /><circle cx="17" cy="17" r="3" fill="#eee" /></g>,
  crs: <g fill="none" stroke="#eee" strokeWidth="1"><path d="M12 1l10 7 1 5-6 9H7L1 13l1-5z" fill="#777" stroke="#777" /><ellipse cx="12" cy="12" rx="5" ry="10.500" /><path d="M0 12h24M2 6.500h20M2 17.500h20M12 1v22" /></g>,
  chat: <g><path d="M12 2C5 2 1 6 1 11s4 8.500 9 8.500h4L18 23v-4.500c3-1.500 5-4 5-7.500 0-5-4-9-11-9z" fill="#5d5d5d" /><circle cx="7" cy="10.800" r="1.600" fill="#fff" /><circle cx="12" cy="10.800" r="1.600" fill="#fff" /><circle cx="17" cy="10.800" r="1.600" fill="#fff" /></g>,
};

const Icon = ({ n, className = "h-[24px] w-[24px]", dim = false }: { n: string; className?: string; dim?: boolean }) => (
  <svg viewBox="0 0 24 24" className={"block shrink-0 overflow-visible " + className + (dim ? " opacity-45 saturate-50" : "")}>
    {G[n]}
  </svg>
);

/* ---------- toolbars ---------- */
const Grip = () => (
  <svg viewBox="0 0 5 19" className="h-[19px] w-[5px] shrink-0">
    {[0, 3, 6, 9, 12, 15, 18].map((y) => (
      <path key={y} d={`M0 ${y}h1v1H0zM3 ${y}h1v1H3z`} fill="#a9a9a9" />
    ))}
  </svg>
);

type Item = string;
function Bar({ items, className }: { items: Item[]; className: string }) {
  return (
    <div className={"flex shrink-0 items-center border-b border-[#b4b4b4] bg-gradient-to-b from-[#fafafa] to-[#eeeeee] " + className}>
      {items.map((it, i) => {
        if (it === "g0") return <div key={i} className="flex w-[13px] shrink-0 justify-center"><Grip /></div>;
        if (it === "g") return <div key={i} className="flex w-[16px] shrink-0 pl-[8px]"><Grip /></div>;
        if (it === "s") return <div key={i} className="flex w-[7px] shrink-0 justify-center"><div className="h-[19px] w-px bg-[#cfcfcf]" /></div>;
        if (it === "c" || it === "c-") return <div key={i} className="flex w-[12px] shrink-0 justify-center pt-[2px]"><Caret dim={it === "c-"} /></div>;
        if (it === "cb") return <div key={i} className="-ml-px mr-[1px] flex h-[31px] w-[12px] shrink-0 items-center justify-center rounded-[2px] border border-[#ababab] bg-white"><Caret /></div>;
        const dim = it.startsWith("-");
        const on = it.startsWith("!");
        const wh = it.startsWith("#");
        const name = it.replace(/^[-!#]/, "");
        return (
          <div key={i} className="flex w-[33px] shrink-0">
            <div
              className={
                "flex h-[31px] w-[32px] items-center justify-center " +
                (on ? "rounded-[2px] border border-[#adadad] bg-[#dadada]" : wh ? "rounded-[2px] border border-[#ababab] bg-white" : "")
              }
            >
              <Icon n={name} dim={dim} />
            </div>
          </div>
        );
      })}
    </div>
  );
}

const row1 = ["g0", "new", "open", "save", "layoutNew", "layoutMgr", "style", "g", "!pan", "panSel", "zoomIn", "zoomOut", "zoomFull", "-zoomSel", "zoomLayer", "zoom11", "zoomLast", "-zoomNext", "mapNew", "map3d", "bookmarkNew", "bookmark", "clock", "refresh", "g", "identify", "-table", "-abacus", "!gear", "sigma", "#measure", "cb", "tip", "-action", "c-", "text", "c"];
const row2 = ["g0", "dsm", "gpkg", "shp", "spatialite", "mem", "s", "virtual", "s", "g", "-edits", "-pencil", "-saveEdit", "-points", "-vertex", "c-", "-multiEdit", "-trash", "-cut", "-copy", "-paste", "-undo", "-redo", "g", "-tag", "-diagram", "s", "tagBlue", "tagRed", "s", "-tagPin", "-tagEye", "-tagMove", "-tagRot", "-tagEdit", "g", "search", "g", "python", "plugin", "g", "help", "g"];
const row3 = ["g0", "-select", "c-", "-selForm", "c-", "deselect", "c", "selLoc"];

const menus: [string, string, number, number][] = [
  ["プロジェクト", "J", 63, 15], ["編集", "E", 37, 15], ["ビュー", "V", 38, 16], ["レイヤ", "L", 40, 16], ["設定", "S", 36, 15],
  ["プラグイン", "P", 58, 15], ["ベクタ", "O", 43, 16], ["ラスタ", "R", 40, 16], ["データベース", "D", 67, 15], ["Web", "W", 42, 15],
  ["メッシュ", "M", 52, 15], ["プロセシング", "C", 70, 15], ["ヘルプ", "H", 45, 0],
];

/* ---------- docks ---------- */
const DockTitle = ({ title, w }: { title: string; w: number }) => (
  <div className="flex h-[20px] shrink-0 items-center justify-between pl-[4px] pr-[2px]">
    <Fit w={w} className="text-[13px] leading-[18px]">{title}</Fit>
    <div className="flex gap-[3px]">
      <svg viewBox="0 0 11 11" className="h-[11px] w-[11px]"><rect x=".5" y=".5" width="10" height="10" rx="2" fill="none" stroke="#666" /><path d="M4.500 2.500h4v4h-4zM2.500 4.500h4v4h-4z" fill="#efefef" stroke="#666" strokeWidth=".9" /></svg>
      <svg viewBox="0 0 11 11" className="h-[11px] w-[11px]"><rect x=".5" y=".5" width="10" height="10" rx="2" fill="none" stroke="#666" /><path d="M3 3l5 5M8 3L3 8" stroke="#555" strokeWidth="2" /></svg>
    </div>
  </div>
);

const Tri = ({ open = false }: { open?: boolean }) => (
  <svg viewBox="0 0 8 8" className="h-[8px] w-[8px] shrink-0">
    <path d={open ? "M0 2h8L4 6z" : "M2 0l4 4-4 4z"} fill="#606060" />
  </svg>
);

const browser: [string, string, number, string][] = [
  ["star", "お気に入り", 51, ""], ["bookmark", "空間ブックマーク", 76, ">"], ["home", "ホーム", 27, ">"], ["folder", "C:¥", 16, ">"], ["folder", "D:¥", 17, ">"],
  ["box", "GeoPackage", 65, ""], ["feather", "SpatiaLite", 51, ""], ["postgis", "PostGIS", 40, ""], ["hana", "SAP HANA", 58, ""], ["mssql", "MSSQL", 37, ""],
  ["oracle", "Oracle", 34, ""], ["wms", "WMS/WMTS", 67, ""], ["vtiles", "Vector Tiles", 59, ""], ["xyz", "XYZ Tiles", 47, "v"], ["xyz", "OpenStreetMap", 83, "child"],
  ["wcs", "WCS", 24, ""], ["wfs", "WFS / OGC API - Features", 134, ""], ["ows", "OWS", 26, ""], ["arcgis", "ArcGIS REST Servers", 103, ""], ["geonode", "GeoNode", 50, ""],
];
const tools: [string, string, number][] = [
  ["history", "最近使ったツール", 79], ["q", "データベース", 52], ["q", "ネットワーク解析", 75], ["q", "ファイルツール", 60], ["q", "プロット", 33],
  ["q", "ベクタオーバーレイ", 80], ["q", "ベクタジオメトリ", 70], ["q", "ベクタタイル", 55], ["q", "ベクタテーブル", 63], ["q", "ベクター般", 51],
  ["q", "ベクタ解析", 51], ["q", "ベクタ作成", 51], ["q", "ベクタ選択", 51], ["q", "メッシュ", 33], ["q", "ラスタツール", 52], ["q", "ラスタ解析", 49],
  ["q", "ラスタ作成", 49], ["q", "ラスタ地形解析", 73], ["q", "レイヤツール", 54], ["q", "地図製作", 47], ["q", "内挿", 23], ["gdal", "GDAL", 29], ["grass", "GRASS", 35], ["saga", "SAGA", 29],
];
const layers = ["DT48216", "DT48213", "DT48212", "DT48217", "DT48218", "DT48211"];

/* ---------- aerial photo ---------- */
type P = [number, number];
function inside(p: P[], x: number, y: number) {
  let c = false;
  for (let i = 0, j = p.length - 1; i < p.length; j = i++) {
    if (p[i][1] > y !== p[j][1] > y && x < ((p[j][0] - p[i][0]) * (y - p[i][1])) / (p[j][1] - p[i][1]) + p[i][0]) c = !c;
  }
  return c;
}
function rng(seed: number) {
  let s = seed;
  return () => {
    s = (s * 1664525 + 1013904223) % 4294967296;
    return s / 4294967296;
  };
}
function poly(s: string): P[] {
  return s.trim().split(/\s+/).map((q) => q.split(",").map(Number) as P);
}
function Scatter({ area, n, colors, min = 3, max = 9, seed = 1 }: { area: string; n: number; colors: string[]; min?: number; max?: number; seed?: number }) {
  const pts = poly(area);
  const xs = pts.map((p) => p[0]);
  const ys = pts.map((p) => p[1]);
  const x0 = Math.min(...xs), x1 = Math.max(...xs), y0 = Math.min(...ys), y1 = Math.max(...ys);
  const r = rng(seed);
  const out = colors.map(() => "");
  for (let i = 0; i < n; i++) {
    const x = x0 + r() * (x1 - x0), y = y0 + r() * (y1 - y0);
    const w = min + r() * (max - min), h = min + r() * (max - min);
    const k = Math.floor(r() * colors.length);
    if (inside(pts, x, y)) out[k] += `M${x.toFixed(0)} ${y.toFixed(0)}h${w.toFixed(0)}l2 ${(h / 2).toFixed(0)}l-3 ${(h / 2).toFixed(0)}h-${w.toFixed(0)}l-2 -${(h / 2).toFixed(0)}z`;
  }
  return <g>{out.map((d, i) => <path key={i} d={d} fill={colors[i]} />)}</g>;
}

const LAND = "110,518 85,560 60,590 48,640 50,700 52,750 80,768 56,782 100,870 160,980 215,1080 272,1195 1930,1195 2020,1155 2140,1085 2260,990 2345,942 2362,915 2366,885 2350,855 2325,835 2290,795 2250,765 2200,735 2110,716 2010,700 1970,705 1900,700 1850,700 1700,698 1610,692 1560,690 1520,688 1425,672 1330,665 1200,652 1080,643 960,636 850,625 760,610 752,570 725,540 690,514 655,512 650,530 655,552 620,572 560,585 490,586 400,572 340,575 280,552 210,548 140,530";
const WOODS = "515,690 640,694 700,690 800,672 900,680 1065,690 1060,760 1040,800 1035,900 1000,1060 960,1195 640,1195 560,1090 500,1020 490,960 510,920 505,800";
const GARDEN = "1770,750 1870,742 2000,752 2120,762 2200,785 2245,820 2262,880 2250,905 2160,960 2060,1020 1960,1080 1900,1110 1830,1120 1830,950 1765,930 1765,880 1750,860";
const LOT = "340,1100 480,1015 560,1100 650,1195 370,1195";
const FIELD1 = "1135,755 1420,760 1680,775 1690,890 1560,905 1460,935 1340,1010 1220,1090 1150,1140 1040,1080 1090,960 1110,850";

/* lines of floating rafts: each strip is a short slanted run of dots */
function rafts(x: number, y: number, nx: number, ny: number, seed: number) {
  const r = rng(seed);
  let a = "", b = "";
  for (let j = 0; j < ny; j++)
    for (let i = 0; i < nx; i++)
      for (let k = 0; k < 2; k++) {
        if (r() < 0.08) continue;
        const px = x + i * 6.5 - j * 11 + k * 3, py = y + i * 5 + j * 12 - k * 4 + (r() - 0.5) * 2;
        b += `M${(px - 1).toFixed(0)} ${(py - 2).toFixed(0)}h6v6h-6z`;
        if (r() > 0.3) a += `M${px.toFixed(0)} ${py.toFixed(0)}h3v3h-3z`;
      }
  return <g><path d={b} fill="#222b2c" opacity=".6" /><path d={a} fill="#b0a8a6" /></g>;
}

const Aerial = () => (
  <svg viewBox="0 0 940 388" className="block h-[388px] w-[940px]">
    <defs>
      <clipPath id="frame"><path d="M0 1H626V0H940V387H626V388H0z" /></clipPath>
      <clipPath id="land"><polygon points={LAND} /></clipPath>
      <linearGradient id="water" x1="0" y1="0" x2="1" y2=".25">
        <stop offset="0" stopColor="#314742" /><stop offset=".3" stopColor="#354b43" /><stop offset=".5" stopColor="#40534a" /><stop offset="1" stopColor="#41544b" />
      </linearGradient>
      <radialGradient id="lite"><stop offset="0" stopColor="#52645a" /><stop offset="1" stopColor="#52645a" stopOpacity="0" /></radialGradient>
      <radialGradient id="dark"><stop offset="0" stopColor="#2f4643" /><stop offset="1" stopColor="#2f4643" stopOpacity="0" /></radialGradient>
      <radialGradient id="dome" cx=".45" cy=".6"><stop offset="0" stopColor="#fff" /><stop offset=".6" stopColor="#dfe3ea" /><stop offset="1" stopColor="#a9b4c2" /></radialGradient>
      <filter id="grain" x="0" y="0" width="1" height="1">
        <feTurbulence type="fractalNoise" baseFrequency=".55" numOctaves="3" seed="4" />
        <feColorMatrix values="1.600 0 0 0 -.38  1.600 0 0 0 -.38  1.600 0 0 0 -.38  0 0 0 0 1" />
      </filter>
      <filter id="patch" x="0" y="0" width="1" height="1">
        <feTurbulence type="fractalNoise" baseFrequency=".07" numOctaves="4" seed="9" />
        <feColorMatrix values="2 0 0 0 -.5  2 0 0 0 -.5  2 0 0 0 -.5  0 0 0 0 1" />
      </filter>
    </defs>
    <g clipPath="url(#frame)">
      <rect width="940" height="388" fill="url(#water)" />
      <g transform="translate(-8 -9) scale(.33333)">
        <ellipse cx="1400" cy="120" rx="380" ry="260" fill="url(#lite)" opacity=".7" />
        <ellipse cx="1980" cy="160" rx="360" ry="260" fill="url(#lite)" opacity=".4" />
        <ellipse cx="2600" cy="90" rx="380" ry="160" fill="url(#lite)" opacity=".6" />
        <ellipse cx="1480" cy="430" rx="420" ry="180" fill="url(#lite)" opacity=".35" />
        <ellipse cx="1730" cy="220" rx="260" ry="120" fill="url(#dark)" opacity=".45" transform="rotate(20 1730 220)" />
        <ellipse cx="2300" cy="260" rx="380" ry="160" fill="url(#dark)" opacity=".4" />
        <ellipse cx="2550" cy="170" rx="300" ry="70" fill="url(#dark)" opacity=".3" />
        <ellipse cx="1000" cy="480" rx="500" ry="160" fill="url(#dark)" opacity=".6" />
        <ellipse cx="1650" cy="590" rx="500" ry="90" fill="url(#dark)" opacity=".5" />
        <ellipse cx="2280" cy="1120" rx="400" ry="230" fill="url(#dark)" opacity=".7" />
        <ellipse cx="30" cy="1000" rx="280" ry="330" fill="url(#dark)" />
        <ellipse cx="780" cy="410" rx="200" ry="90" fill="url(#lite)" opacity=".2" />
        <path d="M2480 340C2560 400 2570 480 2560 560 2580 640 2540 760 2540 860" fill="none" stroke="#55675b" strokeWidth="12" opacity=".14" />
        <path d="M1425 95C1700 130 2050 130 2300 250 2420 300 2500 350 2540 430" fill="none" stroke="#55675b" strokeWidth="5" opacity=".16" />

        {/* fixed nets */}
        <g fill="none" stroke="#142832" strokeWidth="3" strokeDasharray="9 5">
          <path d="M192 145C250 110 290 88 340 90 400 90 430 150 444 203M344 108L250 138 195 152M344 108L440 195M344 112L330 220 300 360 274 505" />
          <path d="M640 384L660 362 745 362 768 388M640 384L765 382M700 386L692 430 676 482" strokeWidth="2.500" />
        </g>
        <path d="M344 118L330 220 300 360 274 500" fill="none" stroke="#6c7fa0" strokeWidth="3" strokeDasharray="3 20" />
        <path d="M240 146h18v10h-18zM437 197h14v9h-14zM637 381h9v7h-9zM762 385h9v6h-9z" fill="#3f7378" />
        <path d="M606 109h6v5h-6zM921 293h11v5h-11zM586 419h4v5h-4zM2100 658h9v6h-9zM1442 630h5v5h-5z" fill="#c4d2da" />
        <path d="M598 108h8v8h-8z" fill="#1c2c2c" />
        <g fill="none" stroke="#1d2d30" strokeWidth="2" strokeDasharray="3 6">
          <path d="M2232 350L2420 465 2320 578 2138 460z" /><path d="M2776 268L2640 425 2845 545M2776 268L2860 320" />
        </g>
        {rafts(2244, 376, 7, 9, 3)}
        {rafts(2324, 446, 10, 9, 5)}
        {rafts(2784, 282, 10, 13, 7)}
        {rafts(2815, 400, 8, 5, 8)}
        <path d="M2762 465l30 5 50 28-10 25-50-25z" fill="#191c22" />
        <Scatter area="2760,460 2800,470 2842,500 2835,525 2780,500" n={120} colors={["#7b6f68", "#41413f", "#8f8fa0"]} min={3} max={6} seed={72} />
        <path d="M2258 475l5-3 9 14-4 3zM2278 462h8v7h-8z" fill="#cfeaf5" />
        <Scatter area="2760,350 2820,345 2830,375 2770,390" n={70} colors={["#7b6f68", "#41413f", "#a09890"]} min={3} max={6} seed={71} />

        {/* shore vegetation outside the bank */}
        <Scatter area="100,515 240,515 330,550 480,570 650,545 650,575 480,592 300,585 150,560" n={1100} colors={["#3d4135", "#6b6456", "#4d5a38", "#867a6c", "#232c26"]} min={3} max={8} seed={2} />
        <Scatter area="760,600 900,610 1080,632 1140,628 1200,622 1210,650 1290,630 1340,640 1345,665 1390,645 1420,660 1425,680 1100,655 800,640" n={1100} colors={["#4b453d", "#6b6456", "#3b4a2e", "#867a6c", "#232c26"]} min={3} max={8} seed={12} />
        <Scatter area="1530,675 1610,645 1700,665 1800,668 1850,660 1910,668 1960,690 2020,685 2100,700 2200,718 2300,770 2340,830 2280,790 2200,745 2000,715 1700,712 1540,705" n={3400} colors={["#5c5247", "#7d7164", "#8c8073", "#3b3e32", "#4a4339", "#57683d"]} min={4} max={9} seed={13} />

        <polygon points={LAND} fill="#7d7766" />
        <g clipPath="url(#land)">
          <Scatter area="40,520 110,518 130,560 98,640 95,760 40,760" n={1100} colors={["#4a443b", "#6f6559", "#857a6e", "#3b4232"]} min={4} max={10} seed={3} />
          <Scatter area="130,528 320,552 480,582 650,560 650,580 480,600 300,592 130,566" n={900} colors={["#4a443b", "#7b6f62", "#5c7a35", "#3b4232"]} min={4} max={10} seed={14} />
          <path d="M110 655L200 640 500 675 700 678 820 655 1425 705 1760 745 2000 735 2160 750 2240 790 2280 850 2280 910 2200 970 1900 1150 1840 1195" fill="none" stroke="#74775a" strokeWidth="48" />
          {/* beach */}
          <path d="M118 552L200 574 300 590 420 596 500 594 590 588 650 572 690 545 700 530 730 548 748 580 756 632 735 650 690 663 570 663 420 650 300 640 220 632 150 630 106 642 98 605z" fill="#d8cfc8" />
          <Scatter area="120,560 300,592 650,575 740,580 745,640 570,660 110,638" n={500} colors={["#e2dad4", "#d0c7bf", "#ddd5cf"]} min={3} max={7} seed={4} />
          <Scatter area="650,512 690,512 735,550 755,590 740,590 700,540 655,545" n={260} colors={["#a69b91", "#c8beb4", "#7a7066"]} min={3} max={8} seed={5} />
          <path d="M345 592h18v12h-18zM490 605h20v6h-20zM585 603h24v6h-24zM652 618h12v8h-12z" fill="#9a9a82" />

          {/* western promenade and lawn */}
          <path d="M60 782L110 785 200 930 300 1110 350 1195 272 1195 160 985z" fill="#aaa69c" />
          <path d="M75 800L235 1110 275 1195" fill="none" stroke="#8f8d86" strokeWidth="4" strokeDasharray="14 9" />
          <path d="M115 865q45 10 45 70M200 990q40 0 45 45M235 1095q25 10 30 60" fill="none" stroke="#8d8f8e" strokeWidth="6" />
          <path d="M105 785L140 780 250 985 330 1150 340 1195 310 1195 200 960z" fill="#59623f" />
          <path d="M190 935l35 10 15 30 25 20 10 60-30-20-30-45z" fill="#bdb8b0" />
          <path d="M145 745C140 700 175 672 215 668L485 685 495 700 492 800 478 945 350 950 262 975 190 830z" fill="#65764e" />
          <Scatter area="145,745 180,680 485,690 478,945 262,970 190,830" n={700} colors={["#69794f", "#60714a", "#6c7b52"]} min={4} max={12} seed={6} />
          <path d="M380 685l8 0-4 60-4 35 16 2" fill="none" stroke="#8b946f" strokeWidth="3" />
          <Scatter area="400,785 425,780 450,800 445,825 410,825" n={90} colors={["#4b5f3c", "#3c4f33"]} min={4} max={8} seed={7} />
          <path d="M80 785L130 770 135 735C135 690 170 664 210 660L500 683" fill="none" stroke="#988f80" strokeWidth="11" />
          <path d="M135 770L215 930 262 1010 345 1195" fill="none" stroke="#958c7d" strokeWidth="11" />
          <path d="M262 985L350 953 480 955 530 965" fill="none" stroke="#a89f90" strokeWidth="15" />
          <Scatter area="478,690 512,690 515,960 470,960 485,820" n={240} colors={["#c9b6b8", "#6d6358", "#8f867a", "#3c4031"]} min={4} max={12} seed={8} />

          {/* wooded museum grounds */}
          <polygon points={WOODS} fill="#4a4b3c" />
          <Scatter area={WOODS} n={4200} colors={["#2c3524", "#3b442c", "#5a5844", "#68624f", "#444e32", "#252c20", "#756c5a"]} min={4} max={12} seed={9} />
          <Scatter area="515,690 760,690 1065,690 1060,740 900,715 740,740 620,800 520,800" n={1600} colors={["#1e2a1b", "#33402a", "#44522f", "#18231500".slice(0, 7)]} min={4} max={11} seed={10} />
          <path d="M730 715l40-12 40 8-15 40-50 25-15-20z" fill="#30372b" />
          <path d="M735 825L820 830 850 790 830 770 860 715M735 810L780 790 820 750 850 715" fill="none" stroke="#8c8473" strokeWidth="10" />
          <path d="M735 812L790 795 830 755" fill="none" stroke="#5f7a40" strokeWidth="8" />
          <path d="M838 714h13v9h-13zM835 775h7v9h-7zM868 740h20v8h-20z" fill="#2f7fd6" />
          <path d="M565 738h8v30h-8zM570 742h65v28h-65z" fill="#b8b4ab" /><path d="M580 740h45v14h-45z" fill="#3b3532" />
          <Scatter area="860,740 930,720 1010,740 1040,800 1040,920 930,930 925,850 870,830" n={500} colors={["#70777f", "#a6abb1", "#3c4248", "#c8ccd0", "#54606c"]} min={4} max={12} seed={11} />
          <ellipse cx="942" cy="787" rx="56" ry="46" fill="url(#dome)" /><path d="M937 783h9v9h-9z" fill="#9fb0b4" />
          <ellipse cx="904" cy="812" rx="15" ry="13" fill="#777b80" />
          <path d="M842 855L885 825" stroke="#dfe2e6" strokeWidth="8" />
          <path d="M925 845h60l10 50h-65z" fill="#d5d8d8" /><Scatter area="930,850 990,845 990,890 935,895" n={60} colors={["#8a9096", "#555"]} min={4} max={10} seed={22} />
          <path d="M885 840l38-12v48l-20 5z" fill="#2f4a2a" />
          <path d="M645 870Q780 835 870 862 905 875 935 893L915 900Q800 868 645 875z" fill="#cfd2da" />
          <path d="M685 882h90v70h-90zM800 885h85v70h-85z" fill="#87857f" stroke="#d5d3cd" strokeWidth="4" />
          <path d="M755 935h45v20h-45z" fill="#57554f" stroke="#d5d3cd" strokeWidth="3" />
          <path d="M775 883l20 0-5 35-12 5z" fill="#a6bfc2" />
          <path d="M675 955h240v28l-245-8z" fill="#8a7465" /><path d="M605 955l55-22 15 30-60 15z" fill="#6d6a66" />
          <path d="M910 905l98 28-8 48-95-28z" fill="#596672" /><path d="M915 920l85 25M912 935l85 25M908 948l85 24" stroke="#b5babe" strokeWidth="3" strokeDasharray="6 5" />
          <path d="M700 1010L760 1035 850 1035 930 1055 985 1080M740 1020L750 1090M800 1020L780 1070M560 1045L640 1015 700 1010" fill="none" stroke="#9a9284" strokeWidth="11" />
          <circle cx="769" cy="1046" r="22" fill="#6d6b55" /><circle cx="769" cy="1046" r="13" fill="#39442c" />
          <path d="M767 972h14l-3 70h-14zM760 1060h13l-3 55h-13z" fill="#9ba7b4" />
          <path d="M805 1028l62 8-2 14-62-12zM950 1003h45l-4 35-48-5z" fill="#aeb2b4" /><path d="M955 1010h35M952 1022h35" stroke="#4a5058" strokeWidth="5" strokeDasharray="8 4" />
          <path d="M590 1055l20-8 110 115-18 16-50-40z" fill="#abb3bb" /><path d="M605 1062L650 1115" stroke="#3c4248" strokeWidth="7" strokeDasharray="6 8" />
          <path d="M625 1040l30-10 42 50-8 18-35-10z" fill="#77767a" />
          <path d="M690 1115l175 20v16l-175-20z" fill="#444c55" /><path d="M700 1120l160 18" stroke="#b6bbc0" strokeWidth="4" strokeDasharray="14 9" /><path d="M768 1135h30v55h-30z" fill="#8f949a" />
          <path d="M815 1080h90v14h-90z" fill="#5c5d60" /><path d="M840 1084h60" stroke="#c46a50" strokeWidth="4" strokeDasharray="5 15" />

          {/* south-west car park */}
          <path d="M268 995L340 975 450 990 478 1015 300 1062z" fill="#6d6d6b" />
          <path d="M300 990l30 55M340 980l38 55M380 980l25 45" stroke="#4d5540" strokeWidth="6" />
          <path d="M270 992l38-12 3 10-38 14z" fill="#d5d8d8" /><path d="M405 980l40-10 5 20-35 6z" fill="#b8b5aa" />
          <path d="M300 1062L480 1012 560 1085 655 1195 350 1195z" fill="#6e6f6d" />
          <g stroke="#596b45" strokeWidth="7" strokeDasharray="30 7" fill="none">
            <path d="M375 1065L470 1020M395 1105L500 1050M440 1130L530 1080M470 1160L565 1105M510 1180L590 1130M550 1195L620 1150" />
          </g>
          <path d="M335 1095L440 1195M365 1055L510 1195" stroke="#7b7b79" strokeWidth="9" />
          <path d="M480 1010L560 1090 655 1195" fill="none" stroke="#8a8172" strokeWidth="9" />
          <Scatter area={LOT} n={140} colors={["#7a7b78", "#8f908e", "#5f605d"]} min={2} max={4} seed={15} />

          {/* central field */}
          <path d="M1095 745L1170 735 1425 748 1690 765 1705 900 1500 935 1660 1010 1660 1195 965 1195 1050 1050 1085 900z" fill="#4b6138" />
          <polygon points={FIELD1} fill="#7b705e" />
          <Scatter area="1135,755 1420,760 1675,775 1685,885 1560,905 1400,965 1200,880 1120,850" n={2400} colors={["#78645a", "#827064", "#6d5d51", "#8b7a6e", "#6f684f"]} min={4} max={12} seed={16} />
          <Scatter area="1360,820 1500,800 1620,830 1560,895 1440,900" n={500} colors={["#94857a", "#8b7a6e"]} min={4} max={12} seed={26} />
          <Scatter area="1120,850 1250,930 1400,960 1220,1090 1100,1110 1060,1060" n={900} colors={["#7d7460", "#857b67", "#757053"]} min={4} max={10} seed={17} />
          <path d="M1150 1160L1450 950 1475 925 1640 985 1640 1195 1000 1195 1040 1100z" fill="#8b826e" />
          <Scatter area="1180,1150 1450,970 1640,1020 1635,1195 1010,1195 1040,1110" n={2000} colors={["#938974", "#877d69", "#9a907d", "#7b725c"]} min={4} max={11} seed={18} />
          <path d="M1068 1000L1150 1015 1100 1080 1145 1135 1120 1135 1040 1090z" fill="#777774" />
          <path d="M1040 1090L1140 1140 1180 1125 1280 1050 1430 950C1500 905 1600 905 1710 905" fill="none" stroke="#7f7d76" strokeWidth="12" />
          <path d="M1445 955C1500 920 1560 925 1612 930L1615 1002 1560 1000 1450 975z" fill="#75777a" />
          <path d="M1632 925h68v85h-62z" fill="#6f7378" />
          <path d="M1652 940v65M1690 930v75" stroke="#c5cbd2" strokeWidth="7" strokeDasharray="4 6" />
          <path d="M1430 985C1500 1015 1600 1015 1690 1020L1690 1060 1650 1195 1625 1195 1640 1080 1635 1030 1500 1010z" fill="#435c31" />
          <path d="M1610 1010L1790 1095" stroke="#34402d" strokeWidth="10" opacity=".8" />

          {/* roads */}
          <path d="M920 1195L1000 1080 1050 960 1075 800C1085 735 1120 722 1180 724L1425 738 1640 752C1710 755 1735 790 1735 850L1712 1195" fill="none" stroke="#8a8b8a" strokeWidth="21" />
          <path d="M920 1195L1000 1080 1050 960 1075 800C1085 735 1120 722 1180 724L1425 738 1640 752C1710 755 1735 790 1735 850L1712 1195" fill="none" stroke="#cfcfcd" strokeWidth="3" strokeDasharray="7 10" />
          <path d="M1055 700V860L1040 960" fill="none" stroke="#8a8170" strokeWidth="9" />
          <path d="M1075 695L1425 715 1620 733 1850 735 2000 737 2150 752C2240 775 2285 830 2278 880 2268 925 2190 955 2130 1005L1930 1125 1850 1195" fill="none" stroke="#807564" strokeWidth="16" />
          <path d="M1200 708L1425 727 1900 722 2100 722 2200 745 2260 775 2310 830 2325 870 2320 910 2180 1000 1980 1130 1900 1195" fill="none" stroke="#757e50" strokeWidth="9" />
          <path d="M760 645L830 638 1000 652 1425 688 1520 696 1540 710 1900 715 2000 710 2120 725 2200 745 2270 785 2345 850 2356 890 2340 928 2250 975 2120 1075 1930 1185" fill="none" stroke="#a3a19a" strokeWidth="7" />
          <path d="M800 642L1000 655 1200 668 1520 692" fill="none" stroke="#b5b2ae" strokeWidth="12" strokeDasharray="22 4 9 5" />
          <path d="M500 685C600 692 680 700 740 678S860 665 1065 688" fill="none" stroke="#3c4034" strokeWidth="7" />
          <path d="M505 675C600 690 680 690 750 650" fill="none" stroke="#a8a296" strokeWidth="5" />

          {/* botanical garden */}
          <polygon points={GARDEN} fill="#67644f" />
          <Scatter area={GARDEN} n={3000} colors={["#424b33", "#58603f", "#757059", "#817a66", "#4e5a36", "#8b826e"]} min={4} max={11} seed={19} />
          <path d="M1800 795h34v60l-25 8-15-15z" fill="#a39878" />
          <Scatter area="1785,780 1835,780 1820,800 1800,860 1785,860" n={100} colors={["#d0bcc0", "#a99898"]} min={4} max={10} seed={20} />
          <path d="M1840 850C1880 800 1950 830 2000 820S2060 860 2110 830M1860 880C1920 840 1990 850 2020 880M2100 790L2140 840 2200 870" fill="none" stroke="#989080" strokeWidth="4" />
          <path d="M1930 885l50-18 45 8-25 35-60 5z" fill="#6d6b3f" />
          <path d="M2100 885l60-15 35 10-10 50-60 20-30-15z" fill="#948a6b" />
          <Scatter area="2070,870 2130,870 2110,910 2080,920" n={60} colors={["#424b33", "#58503f"]} min={5} max={11} seed={27} />
          <path d="M2153 840l14-6 14 8-2 17h-24z" fill="#f2f5f8" /><path d="M2000 825h14v13h-14z" fill="#4da58c" />
          <path d="M1820 895l60-15 50 30 60 8 40-25 20 30 30 15 0 30-60 20-90 15-80 20-20-60z" fill="#8f8b80" />
          <Scatter area="1820,895 2050,890 2060,965 1830,1010" n={420} colors={["#bdbab2", "#4c5641", "#6b6b5f", "#7b776a"]} min={4} max={11} seed={21} />
          <path d="M2000 925l30-10 20 12 0 25-28 14-24-14z" fill="#828c93" />
          <path d="M1900 970l60-32h30l20 30-70 40h-40z" fill="#78838a" /><path d="M1865 1015l30-12 25 10 3 25-28 14-30-10z" fill="#8d999f" />
          <path d="M1935 985l95-8-5 25-45 45-50 5z" fill="#a5b4b2" /><path d="M1940 990l80 0M1940 1005l70 0M1938 1020l60 0M1950 980v68M1970 980v65M1990 978v60" stroke="#7f9490" strokeWidth="3" />
          <path d="M2035 985l48-15-5 40-80 45-20-5z" fill="#45472b" />
          <path d="M1745 950h85v140l-60 5-25-10z" fill="#6f7275" />
          <path d="M1760 960v120M1790 960v125M1812 960v120" stroke="#a8a7a8" strokeWidth="6" strokeDasharray="4 7" /><path d="M1775 960v100" stroke="#65704f" strokeWidth="6" />
          <path d="M1835 1020h45v90h-45z" fill="#5f614e" /><path d="M1848 1040v75M1868 1040v75" stroke="#a5a69d" strokeWidth="4" strokeDasharray="10 5" />
          <Scatter area="1750,890 1815,890 1815,945 1745,945" n={200} colors={["#6d6257", "#74744a", "#575246"]} min={4} max={12} seed={23} />
          <path d="M1740 1120h50v45h-50z" fill="#7b8287" /><path d="M1790 1175l45-35 22 18-16 32h-50z" fill="#b0bec0" />
          <Scatter area="1840,1110 1900,1110 1860,1190 1800,1195 1830,1150" n={160} colors={["#4c5641", "#6b6b5f", "#8b877a"]} min={4} max={10} seed={28} />
          <path d="M1710 1103l65 16 45-15 2 6-40 14 60 15-1 5-70-16-62-20z" fill="#f2f2f4" />
          <path d="M1776 1097l7 2-5 20h-9z" fill="#f0672a" />
          <Scatter area="1945,1065 1990,1065 1980,1090 1930,1105 1925,1090" n={70} colors={["#cdb6bd", "#a8929a"]} min={4} max={9} seed={24} />

          <rect x="40" y="500" width="2340" height="700" filter="url(#patch)" opacity=".22" className="mix-blend-soft-light" />
          <rect x="40" y="500" width="2340" height="700" filter="url(#grain)" opacity=".2" className="mix-blend-soft-light" />
        </g>
        <path d="M2362 915L2345 942 2260 990 2140 1085 2020 1155 1950 1192" fill="none" stroke="#aaa498" strokeWidth="4" strokeDasharray="8 4" />
      </g>
      <rect width="940" height="388" filter="url(#grain)" opacity=".06" className="mix-blend-soft-light" />
    </g>
  </svg>
);

/* ---------- status bar widgets ---------- */
const field = "flex h-[21px] shrink-0 items-center rounded-[2px] border border-[#ababab] bg-white text-[12px] leading-[18px]";
const Spin = () => (
  <div className="ml-auto flex h-full w-[14px] flex-col items-center justify-center gap-[3px] border-l border-[#b8b8b8]">
    <svg viewBox="0 0 8 5" className="h-[5px] w-[8px]"><path d="M.3 4.700h7.400L4 .5z" fill="#505050" /></svg>
    <Caret />
  </div>
);
const DotsV = () => (
  <svg viewBox="0 0 1 17" className="h-[17px] w-px"><path d="M0 0h1v1H0zM0 3h1v1H0zM0 6h1v1H0zM0 9h1v1H0zM0 12h1v1H0zM0 15h1v1H0z" fill="#aaa" /></svg>
);

export default function App() {
  return (
    <div className="flex h-[1040px] w-[1920px] flex-col overflow-hidden bg-[#efefef] font-['Noto_Sans','Noto_Sans_CJK_JP',sans-serif] text-[12px] text-black [font-feature-settings:'palt']">
      {/* title bar */}
      <div className="flex h-[23px] shrink-0 items-center bg-white pl-[2px]">
        <Icon n="q" className="h-[16px] w-[16px]" />
        <Fit w={149} className="ml-[5px] text-[13px] leading-[20px]">*無題のプロジェクト — QGIS</Fit>
        <div className="ml-auto flex items-center gap-[35px] pr-[20px]">
          <svg viewBox="0 0 10 10" className="h-[10px] w-[10px]"><path d="M0 5.500h10" stroke="#000" /></svg>
          <svg viewBox="0 0 10 10" className="h-[10px] w-[10px]"><path d="M.5 2.500h7v7h-7zM2.500 2.500v-2h7v7h-2" fill="none" stroke="#000" /></svg>
          <svg viewBox="0 0 10 10" className="h-[10px] w-[10px]"><path d="M.5.5l9 9M9.500.5l-9 9" stroke="#000" strokeWidth="1.100" /></svg>
        </div>
      </div>
      {/* menu bar */}
      <div className="flex h-[20px] shrink-0 items-center border-b border-[#d0d0d0] pl-[10px]">
        {menus.map(([t, k, w, gap]) => (
          <div key={t} className="flex shrink-0" style={{ marginRight: gap }}>
            <Fit w={w} className="leading-[18px]">
              {t}(<span className="underline underline-offset-2">{k}</span>)
            </Fit>
          </div>
        ))}
      </div>
      <Bar items={row1} className="h-[39px]" />
      <Bar items={row2} className="h-[39px]" />
      <Bar items={row3} className="h-[38px]" />

      {/* work area */}
      <div className="flex h-[852px] shrink-0">
        <div className="flex w-[294px] shrink-0 flex-col">
          <DockTitle title="ブラウザ" w={39} />
          <div className="flex h-[31px] shrink-0 items-center gap-[9px] pb-[2px] pl-[8px]">
            {["addLayer", "refresh", "filter", "collapse", "info"].map((n) => <Icon key={n} n={n} className="h-[16px] w-[16px]" />)}
          </div>
          <div className="flex h-[415px] shrink-0 flex-col border border-[#b4b4b4] bg-white">
            {browser.map(([ic, t, w, k]) => (
              <div key={t} className="flex h-[18px] shrink-0 items-center">
                <div className="flex w-[19px] shrink-0 pl-[4px]">{(k === ">" || k === "v") && <Tri open={k === "v"} />}</div>
                {k === "child" && <div className="w-[16px]" />}
                <Icon n={ic} className="h-[15px] w-[16px]" />
                <Fit w={w} className="mt-[2px] ml-[6px] leading-[18px]">{t}</Fit>
              </div>
            ))}
          </div>
          <div className="flex h-[5px] shrink-0 items-center justify-center">
            <svg viewBox="0 0 17 1" className="h-px w-[17px]"><path d="M0 0h1v1H0zM3 0h1v1H3zM6 0h1v1H6zM9 0h1v1H9zM12 0h1v1h-1zM15 0h1v1h-1z" fill="#aaa" /></svg>
          </div>
          <DockTitle title="レイヤ" w={28} />
          <div className="flex h-[30px] shrink-0 items-center pb-[1px] pl-[8px]">
            <Icon n="brush" className="mr-[9px] h-[16px] w-[16px]" />
            <Icon n="addGroup" className="mr-[9px] h-[16px] w-[16px]" />
            <div className="flex w-[26px] items-end"><Icon n="eye" className="h-[16px] w-[16px]" /><Caret className="-ml-[2px] h-[3px] w-[5px]" /></div>
            <div className="flex w-[25px] items-end"><Icon n="filter" className="h-[16px] w-[16px]" /><Caret className="-ml-[4px] h-[3px] w-[5px]" /></div>
            <Icon n="epsilon" className="h-[16px] w-[16px]" />
            <Caret dim className="mr-[8px] ml-[4px]" />
            <Icon n="expand" className="mr-[9px] h-[16px] w-[16px]" />
            <Icon n="collapse" className="mr-[9px] h-[16px] w-[16px]" />
            <Icon n="removeLayer" className="h-[16px] w-[16px]" />
          </div>
          <div className="flex flex-1 flex-col border border-[#b4b4b4] bg-white pt-px">
            {layers.map((t) => (
              <div key={t} className="flex h-[18px] shrink-0 items-center pl-[5px]">
                <Tri />
                <svg viewBox="0 0 14 14" className="ml-[10px] h-[14px] w-[14px] shrink-0"><path d="M.5.5h13v13H.5z" fill="#fff" stroke="#b5b5b5" /><path d="M3.500 6.500l2.700 4 4.500-7.500" fill="none" stroke="#000" strokeWidth="1.800" /></svg>
                <Icon n="raster" className="ml-[8px] h-[13px] w-[13px]" />
                <div className={"ml-[4px] flex h-[18px] flex-1 items-center rounded-[2px] border pl-[2px] " + (t === "DT48212" ? "border-[#b9dcf2] bg-gradient-to-b from-[#f6fbff] to-[#e5f3fc]" : "border-transparent")}>
                  <Fit w={48} className="mt-px font-semibold leading-[16px]" inner={t === "DT48212" ? "underline underline-offset-2" : ""}>{t}</Fit>
                </div>
              </div>
            ))}
          </div>
        </div>
        <div className="flex w-[6px] shrink-0 items-center justify-center"><DotsV /></div>
        <div className="mt-px flex w-[1316px] shrink-0 flex-col border border-[#b4b4b4] bg-white pt-[168px] pl-[132px]">
          <Aerial />
        </div>
        <div className="flex w-[6px] shrink-0 items-center justify-center"><DotsV /></div>
        <div className="flex w-[298px] shrink-0 flex-col">
          <DockTitle title="プロセシングツールボックス" w={129} />
          <div className="flex h-[31px] shrink-0 items-center pb-[2px] pl-[8px]">
            <div className="flex w-[26px] items-end"><Icon n="models" className="h-[16px] w-[16px]" /><Caret className="-ml-[3px] h-[3px] w-[5px]" /></div>
            <div className="flex w-[24px] items-end"><Icon n="py" className="h-[16px] w-[16px]" /><Caret className="-ml-[3px] h-[3px] w-[5px]" /></div>
            <Icon n="history" className="mr-[9px] h-[16px] w-[16px]" />
            <Icon n="doc" className="h-[16px] w-[16px]" />
            <div className="mx-[8px] h-[11px] w-px bg-[#d0d0d0]" />
            <Icon n="editFeat" dim className="h-[16px] w-[16px]" />
            <div className="mx-[7px] h-[11px] w-px bg-[#d0d0d0]" />
            <Icon n="wrench" className="h-[16px] w-[16px]" />
          </div>
          <div className="flex h-[22px] shrink-0 items-center rounded-[2px] border border-[#ababab] bg-white pl-[8px]">
            <Icon n="lens" className="h-[14px] w-[14px]" />
            <Fit w={32} className="ml-[5px] leading-[18px] text-[#7a7a7a]">検索...</Fit>
          </div>
          <div className="flex flex-1 flex-col border border-[#b4b4b4] bg-white">
            {tools.map(([ic, t, w]) => (
              <div key={t} className="flex h-[18px] shrink-0 items-center pl-[6px]">
                <Tri />
                <Icon n={ic} className="ml-[9px] h-[15px] w-[16px]" />
                <Fit w={w} className="mt-[2px] ml-[6px] leading-[18px]">{t}</Fit>
              </div>
            ))}
          </div>
        </div>
      </div>

      {/* status bar */}
      <div className="flex h-[29px] shrink-0 items-center">
        <div className={field + " ml-[4px] w-[200px] pl-[8px]"}>
          <Icon n="lens" className="h-[13px] w-[13px]" />
          <Fit w={75} className="ml-[7px] text-[#7a7a7a]">検索(Ctrl + K)</Fit>
        </div>
        <Fit w={154} className="ml-[7px] text-[11px]">1 個の凡例エントリが削除されました</Fit>
        <div className="ml-auto flex items-center text-[11px]">
          <Fit w={21}>座標</Fit>
          <div className={field + " ml-[4px] w-[110px] pl-[5px]"}><Fit w={97} className="text-[11px]">135.94261,35.06888</Fit></div>
          <Icon n="mouse" className="ml-[5px] h-[16px] w-[16px]" />
          <Fit w={20} className="ml-[12px]">縮尺</Fit>
          <div className={field + " ml-[5px] w-[78px] pl-[2px]"}>
            <Fit w={33} className="text-[11px]">1:3590</Fit>
            <div className="ml-auto flex h-full w-[19px] items-center justify-center border-l border-[#b8b8b8]"><Caret /></div>
          </div>
          <Icon n="lock" className="ml-[11px] h-[16px] w-[16px]" />
          <Fit w={20} className="ml-[7px]">拡大</Fit>
          <div className={field + " ml-[6px] w-[86px] pl-[3px]"}><Fit w={25} className="text-[11px]">100%</Fit><Spin /></div>
          <Fit w={21} className="ml-[9px]">回転</Fit>
          <div className={field + " ml-[11px] w-[82px] pl-[3px]"}><Fit w={18} className="text-[11px]">0.0°</Fit><Spin /></div>
          <svg viewBox="0 0 14 14" className="ml-[7px] h-[14px] w-[14px]"><path d="M.5.5h13v13H.5z" fill="#fff" stroke="#b5b5b5" /><path d="M3.500 6.500l2.700 4 4.500-7.500" fill="none" stroke="#000" strokeWidth="1.800" /></svg>
          <Fit w={22} className="ml-[6px]">レンダ</Fit>
          <Icon n="crs" className="ml-[18px] h-[15px] w-[15px]" />
          <Fit w={52} className="ml-[4px]">EPSG:4326</Fit>
          <Icon n="chat" className="mr-[7px] ml-[21px] h-[16px] w-[16px]" />
        </div>
      </div>
    </div>
  );
}
